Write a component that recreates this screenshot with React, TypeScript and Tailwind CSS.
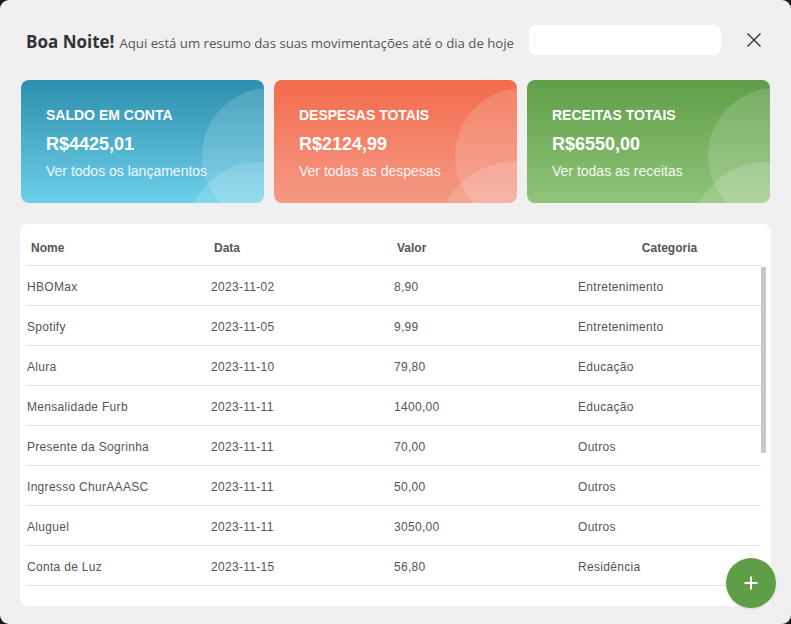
import React from 'react';

const rows = [
  { nome: 'HBOMax', data: '2023-11-02', valor: '8,90', cat: 'Entretenimento' },
  { nome: 'Spotify', data: '2023-11-05', valor: '9,99', cat: 'Entretenimento' },
  { nome: 'Alura', data: '2023-11-10', valor: '79,80', cat: 'Educação' },
  { nome: 'Mensalidade Furb', data: '2023-11-11', valor: '1400,00', cat: 'Educação' },
  { nome: 'Presente da Sogrinha', data: '2023-11-11', valor: '70,00', cat: 'Outros' },
  { nome: 'Ingresso ChurAAASC', data: '2023-11-11', valor: '50,00', cat: 'Outros' },
  { nome: 'Aluguel', data: '2023-11-11', valor: '3050,00', cat: 'Outros' },
  { nome: 'Conta de Luz', data: '2023-11-15', valor: '56,80', cat: 'Residência' },
];

function Card({ title, amount, link, bg }: { title: string; amount: string; link: string; bg: string }) {
  return (
    <div className={`relative overflow-hidden rounded-lg h-[123px] pl-[25px] pt-[26px] text-white ${bg}`}>
      <div className="absolute left-[181px] top-[8px] w-[136px] h-[136px] rounded-full bg-white/15" />
      <div className="absolute left-[164px] top-[82px] w-[150px] h-[150px] rounded-full bg-white/15" />
      <div className="relative">
        <div className="text-[14px] font-bold leading-[18px]">{title}</div>
        <div className="text-[18px] font-bold leading-[22px] mt-[9px]">{amount}</div>
        <div className="text-[14px] leading-[18px] mt-[7px] text-white/90">{link}</div>
      </div>
    </div>
  );
}

export default function App() {
  return (
    <div className="w-[791px] h-[624px] bg-[#1c1c1c]">
      <div
        className="w-full h-full bg-[#f0f0f0] rounded-[9px] flex flex-col"
        style={{ fontFamily: '"Liberation Sans", Arial, sans-serif' }}
      >
        <div className="h-[80px] flex items-center pl-[26px] pr-[28px]">
          <div className="flex items-baseline gap-[5px] text-[#333] mt-[4px]" style={{ fontFamily: '"Open Sans", sans-serif' }}>
            <span className="text-[17px] font-bold text-[#333]">Boa Noite!</span>
            <span className="text-[13.2px] text-[#555]">Aqui está um resumo das suas movimentações até o dia de hoje</span>
          </div>
          <div className="ml-auto w-[192px] h-[30px] bg-white rounded-[7px]" />
          <button className="ml-[24px] w-[18px] h-[18px] flex items-center justify-center text-[#333]">
            <svg width="16" height="16" viewBox="0 0 16 16" fill="none" stroke="currentColor" strokeWidth="1.4">
              <path d="M1.5 1.5 L14.5 14.5 M14.5 1.5 L1.5 14.5" />
            </svg>
          </button>
        </div>

        <div className="grid grid-cols-3 gap-[10px] pl-[21px] pr-[21px]">
          <Card title="SALDO EM CONTA" amount="R$4425,01" link="Ver todos os lançamentos" bg="bg-gradient-to-b from-[#2c8fae] to-[#6dd0ea]" />
          <Card title="DESPESAS TOTAIS" amount="R$2124,99" link="Ver todas as despesas" bg="bg-gradient-to-b from-[#f36a4b] to-[#f49985]" />
          <Card title="RECEITAS TOTAIS" amount="R$6550,00" link="Ver todas as receitas" bg="bg-gradient-to-b from-[#5f9e48] to-[#90c47a]" />
        </div>

        <div className="relative mx-[20px] mt-[21px] h-[382px] bg-white rounded-lg pl-[6px] pr-[5px] overflow-hidden">
          <div className="flex h-[42px] items-center pt-[7px] border-b border-[#e4e4e4] mr-[5px] text-[12px] font-bold text-[#555]">
            <div className="w-[185px] pl-[5px]">Nome</div>
            <div className="w-[183px] pl-[3px]">Data</div>
            <div className="w-[184px] pl-[3px]">Valor</div>
            <div className="flex-1 text-center">Categoria</div>
          </div>
          <div className="flex">
            <div className="flex-1">
              {rows.map((r) => (
                <div key={r.nome} className="flex h-[40px] items-center pt-[2px] border-b border-[#e4e4e4] text-[12px] text-[#555] tracking-[0.3px]">
                  <div className="w-[185px] pl-[1px]">{r.nome}</div>
                  <div className="w-[183px]">{r.data}</div>
                  <div className="w-[184px]">{r.valor}</div>
                  <div className="flex-1">{r.cat}</div>
                </div>
              ))}
            </div>
            <div className="w-[5px] pt-[1px]">
              <div className="h-[186px] bg-[#c9c9c9]" />
            </div>
          </div>
        </div>

        <button className="absolute left-[726px] top-[558px] w-[50px] h-[50px] rounded-full bg-[#5f9e47] flex items-center justify-center shadow-sm">
          <svg width="16" height="16" viewBox="0 0 16 16" stroke="white" strokeWidth="2" fill="none">
            <path d="M8 1.5 V14.5 M1.5 8 H14.5" />
          </svg>
        </button>
      </div>
    </div>
  );
}
